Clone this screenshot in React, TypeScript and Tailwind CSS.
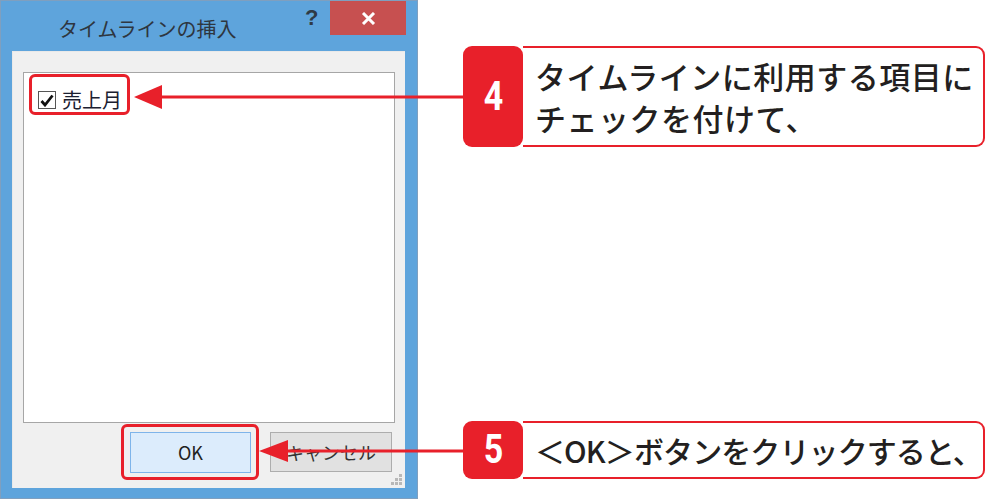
const red = "#e8202a"

function Callout({ num, children, h }: { num: string; children: React.ReactNode; h: string }) {
    return (
        <div className={`flex w-[522px] ${h}`}>
            <div className="flex w-[60px] shrink-0 items-center justify-center rounded-[9px] bg-[#e8202a]">
                <span className="scale-x-85 font-['Roboto',sans-serif] text-[40px] leading-none font-bold text-white">
                    {num}
                </span>
            </div>
            <div className="flex min-w-0 flex-1 items-center rounded-r-[9px] border-y-2 border-r-2 border-[#e8202a] bg-white pl-[12px]">
                {children}
            </div>
        </div>
    )
}

export default function App() {
    return (
        <div className="relative flex h-[501px] w-[1007px] overflow-hidden bg-white font-['Noto_Sans_CJK_JP',sans-serif]">
            {/* dialog window */}
            <div className="flex h-[499px] w-[418px] shrink-0 flex-col border border-[#7f9fbf] bg-[#5ea4dc]">
                <div className="relative flex h-[50px] shrink-0 items-start">
                    <span className="mt-[14px] ml-[57px] text-[20px] leading-[28px] text-[#2e3640]">
                        タイムラインの挿入
                    </span>
                    <span className="absolute top-[3px] left-[304px] font-['Liberation_Sans',sans-serif] text-[22px] leading-[28px] font-bold text-[#2f3a45]">
                        ?
                    </span>
                    <div className="absolute top-0 left-[329px] flex h-[34px] w-[76px] items-center justify-center bg-[#c75050]">
                        <svg width="15" height="13" viewBox="0 0 15 13">
                            <path d="M2 1 L13 12 M13 1 L2 12" stroke="white" strokeWidth="3" />
                        </svg>
                    </div>
                </div>
                <div className="relative mr-[12px] ml-[11px] flex flex-1 flex-col border-t border-l border-[#e9e9e9] bg-[#f0f0f0] px-[10px] pt-[20px]">
                    <div className="flex-1 border border-[#a6a6a6] bg-white pt-[14px] pl-[14px]">
                        <div className="relative flex items-center gap-[6px]">
                            <div className="flex h-[18px] w-[18px] items-center justify-center border border-[#555] bg-white">
                                <svg width="14" height="13" viewBox="0 0 14 13">
                                    <path d="M1.5 7 L5 11 L12.5 1.5" stroke="#111" strokeWidth="2.8" fill="none" />
                                </svg>
                            </div>
                            <span className="text-[20px] leading-[26px] text-[#1b2030]">売上月</span>
                            <div className="absolute -top-[13px] -left-[9px] h-[41px] w-[101px] rounded-[6px] border-[3px] border-[#e8202a]" />
                        </div>
                    </div>
                    <div className="flex h-[65px] shrink-0 items-start gap-[19px] pt-[9px] pl-[107px]">
                        <div className="relative">
                            <div className="flex h-[41px] w-[121px] items-center justify-center border border-[#7eb4ea] bg-[#dcecfc] text-[18px] text-[#222]">
                                OK
                            </div>
                            <div className="absolute -top-[8px] -right-[8px] -bottom-[7px] -left-[9px] rounded-[6px] border-[3px] border-[#e8202a]" />
                        </div>
                        <div className="flex h-[40px] w-[122px] items-center justify-center border border-[#adadad] bg-[#e1e1e1] text-[18px] text-[#333]">
                            キャンセル
                        </div>
                    </div>
                    <svg className="absolute right-[3px] bottom-[3px]" width="12" height="12" viewBox="0 0 12 12">
                        <rect x="9" y="1" width="3" height="3" fill="#b8b8b8" />
                        <rect x="5" y="5" width="3" height="3" fill="#b8b8b8" />
                        <rect x="9" y="5" width="3" height="3" fill="#b8b8b8" />
                        <rect x="1" y="9" width="3" height="3" fill="#b8b8b8" />
                        <rect x="5" y="9" width="3" height="3" fill="#b8b8b8" />
                        <rect x="9" y="9" width="3" height="3" fill="#b8b8b8" />
                    </svg>
                </div>
                <div className="h-[10px] shrink-0" />
            </div>

            {/* callouts */}
            <div className="ml-[45px] flex flex-col pt-[46px] pb-[22px]">
                <Callout num="4" h="h-[101px]">
                    <p className="text-[31px] leading-[42px] font-medium tracking-[0.5px] whitespace-nowrap text-[#231f20]">
                        タイムラインに利用する項目に
                        <br />
                        チェックを付けて、
                    </p>
                </Callout>
                <div className="flex-1" />
                <Callout num="5" h="h-[58px]">
                    <p className="text-[30px] leading-[40px] font-medium tracking-[-0.9px] whitespace-nowrap text-[#231f20]">
                        ＜OK＞ボタンをクリックすると、
                    </p>
                </Callout>
            </div>

            {/* arrows */}
            <svg className="pointer-events-none absolute top-0 left-0" width="1007" height="501">
                <line x1="158" y1="97" x2="466" y2="97" stroke={red} strokeWidth="3" />
                <polygon points="134,97 162,85 162,109" fill={red} />
                <line x1="282" y1="451" x2="466" y2="451" stroke={red} strokeWidth="3" />
                <polygon points="259,451 288,440 288,462" fill={red} />
            </svg>
        </div>
    )
}
